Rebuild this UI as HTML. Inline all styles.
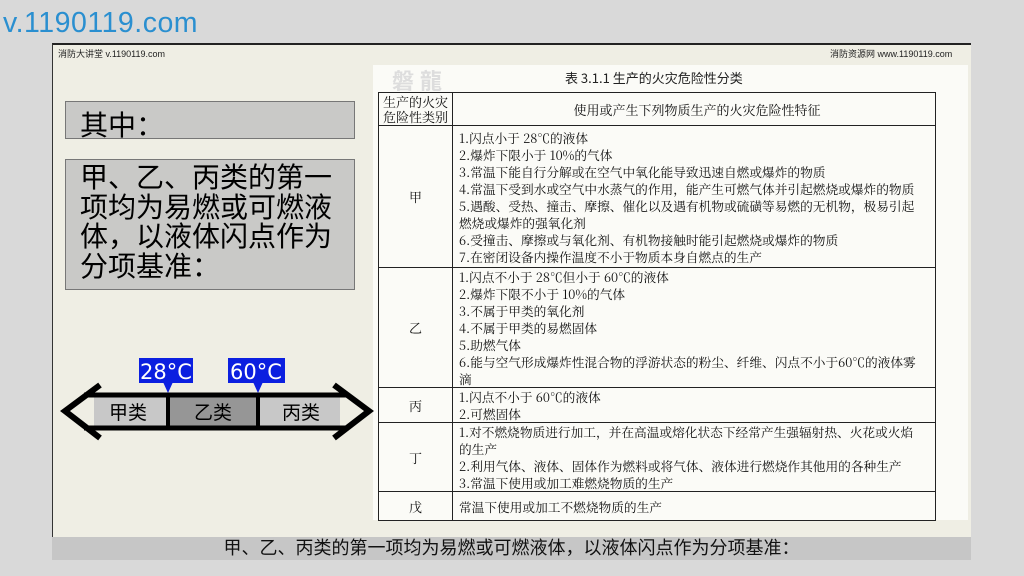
<!DOCTYPE html>
<html><head><meta charset="utf-8"><style>
body{margin:0;width:1024px;height:576px;background:#d9d9d9;position:relative;overflow:hidden;font-family:"Liberation Sans","Noto Sans CJK SC",sans-serif}
.a{position:absolute}
.slide{left:52px;top:43px;width:919px;height:494px;background:#efeee4;border-top:2px solid #222;border-left:1px solid #333;box-sizing:border-box}
.box{background:#c9c9c7;border:1px solid #777;box-sizing:border-box;color:#000;font-size:28px}
table{border-collapse:collapse;font-family:"Noto Serif CJK SC","Liberation Serif",serif;font-size:12.7px;color:#111}
td{border:1.5px solid #222;padding:0 0 0 6px;line-height:17px;vertical-align:middle;white-space:nowrap}
td.c{text-align:center;padding:0;font-size:13px}
</style></head><body>
<div class="a" style="left:3px;top:7px;font-size:28.5px;color:#2a8fd0;letter-spacing:0.5px">v.1190119.com</div>
<div class="a slide"></div>
<div class="a" style="left:58px;top:47px;font-size:9px;color:#222">消防大讲堂 v.1190119.com</div>
<div class="a" style="left:830px;top:47px;font-size:9px;color:#222">消防资源网 www.1190119.com</div>
<div class="a" style="left:373px;top:65px;width:595px;height:455px;background:#fbfbf7"></div>
<div class="a" style="left:392px;top:64px;font-size:22px;color:#ddd;font-weight:bold;letter-spacing:6px">磐龍</div>
<div class="a" style="left:565px;top:68px;font-size:13px;color:#222;font-family:'Noto Sans CJK SC',sans-serif">表 3.1.1 生产的火灾危险性分类</div>
<table class="a" style="left:378px;top:92px;width:558px">
<tr style="height:33px"><td class="c" style="width:73px;line-height:15px">生产的火灾<br>危险性类别</td><td style="text-align:center;font-size:13px">使用或产生下列物质生产的火灾危险性特征</td></tr>
<tr style="height:142px"><td class="c">甲</td><td>1.闪点小于 28℃的液体<br>2.爆炸下限小于 10%的气体<br>3.常温下能自行分解或在空气中氧化能导致迅速自燃或爆炸的物质<br>4.常温下受到水或空气中水蒸气的作用，能产生可燃气体并引起燃烧或爆炸的物质<br>5.遇酸、受热、撞击、摩擦、催化以及遇有机物或硫磺等易燃的无机物，极易引起<br>燃烧或爆炸的强氧化剂<br>6.受撞击、摩擦或与氧化剂、有机物接触时能引起燃烧或爆炸的物质<br>7.在密闭设备内操作温度不小于物质本身自燃点的生产</td></tr>
<tr style="height:120px"><td class="c">乙</td><td>1.闪点不小于 28℃但小于 60℃的液体<br>2.爆炸下限不小于 10%的气体<br>3.不属于甲类的氧化剂<br>4.不属于甲类的易燃固体<br>5.助燃气体<br>6.能与空气形成爆炸性混合物的浮游状态的粉尘、纤维、闪点不小于60℃的液体雾<br>滴</td></tr>
<tr style="height:34px"><td class="c">丙</td><td>1.闪点不小于 60℃的液体<br>2.可燃固体</td></tr>
<tr style="height:68px"><td class="c">丁</td><td>1.对不燃烧物质进行加工，并在高温或熔化状态下经常产生强辐射热、火花或火焰<br>的生产<br>2.利用气体、液体、固体作为燃料或将气体、液体进行燃烧作其他用的各种生产<br>3.常温下使用或加工难燃烧物质的生产</td></tr>
<tr style="height:29px"><td class="c">戊</td><td>常温下使用或加工不燃烧物质的生产</td></tr>
</table>
<div class="a box" style="left:65px;top:101px;width:290px;height:38px;padding:2px 0 0 14px">其中：</div>
<div class="a box" style="left:65px;top:159px;width:290px;height:131px;padding:3px 0 0 14px;line-height:29.5px">甲、乙、丙类的第一<br>项均为易燃或可燃液<br>体，以液体闪点作为<br>分项基准：</div>
<svg class="a" style="left:50px;top:340px" width="330" height="110" viewBox="0 0 330 110">
<path d="M44,53 H118 V89 H44 Z" fill="#c8c8c8"/>
<path d="M118,53 H208 V89 H118 Z" fill="#969696"/>
<path d="M208,53 H290 V89 H208 Z" fill="#c8c8c8"/>
<path d="M50,45 L15,71 L50,98" fill="none" stroke="#000" stroke-width="6"/>
<path d="M284,45 L319,71 L284,98" fill="none" stroke="#000" stroke-width="6"/>
<path d="M34,55 H298 M34,88 H298" stroke="#000" stroke-width="5"/>
<path d="M118,53 V90 M208,53 V90" stroke="#000" stroke-width="4"/>
<rect x="89" y="18" width="54" height="25" fill="#0b1fe0"/><path d="M113,42 L118,53 L123,42Z" fill="#0b1fe0"/>
<rect x="178" y="18" width="57" height="25" fill="#0b1fe0"/><path d="M203,42 L208,53 L213,42Z" fill="#0b1fe0"/>
<text x="116" y="39" fill="#fff" font-size="21" text-anchor="middle" font-family="DejaVu Sans">28°C</text>
<text x="206" y="39" fill="#fff" font-size="21" text-anchor="middle" font-family="DejaVu Sans">60°C</text>
<text x="78" y="79" font-size="19" text-anchor="middle" font-family="Noto Sans CJK SC">甲类</text>
<text x="163" y="79" font-size="19" text-anchor="middle" font-family="Noto Sans CJK SC">乙类</text>
<text x="251" y="79" font-size="19" text-anchor="middle" font-family="Noto Sans CJK SC">丙类</text>
</svg>
<div class="a" style="left:52px;top:537px;width:919px;height:23px;background:#c6c6c6;text-align:center;font-size:18px;line-height:23px;color:#111">甲、乙、丙类的第一项均为易燃或可燃液体，以液体闪点作为分项基准：</div>
</body></html>
